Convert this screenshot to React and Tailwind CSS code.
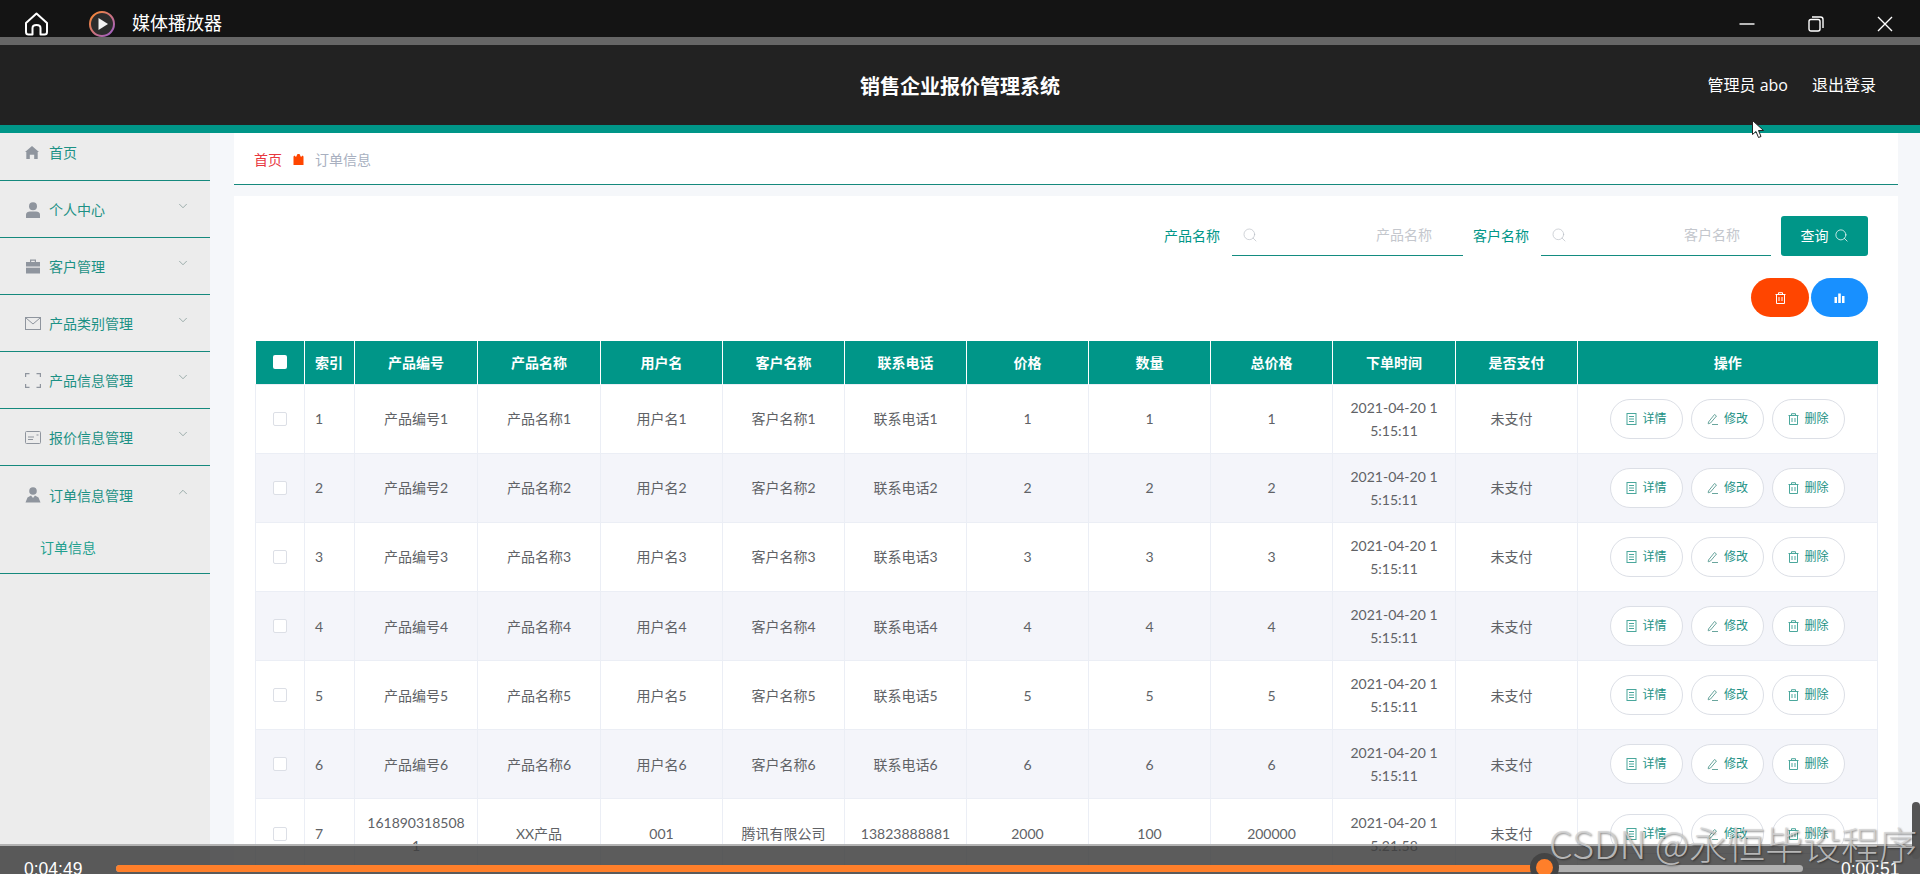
import React from "react";
import { ChevronDown, ChevronUp, Search } from "lucide-react";

const teal = "text-[#009688]";

const Home = () => (
  <svg width="16" height="15" viewBox="0 0 16 15" fill="#8f959e"><path d="M8 0 L16 7 H14.5 V15 H10.5 V10 H5.5 V15 H1.5 V7 H0 Z" /></svg>
);
const User = () => (
  <svg width="16" height="16" viewBox="0 0 16 16" fill="#8f959e"><circle cx="8" cy="4.2" r="4" /><path d="M1 16 V12.5 C1 10.5 3 9.5 5 9.5 H11 C13 9.5 15 10.5 15 12.5 V16 Z" /></svg>
);
const Case = () => (
  <svg width="16" height="15" viewBox="0 0 16 15" fill="#8f959e"><path d="M5 3 V0.5 H11 V3 H9.8 V1.7 H6.2 V3 Z" /><path d="M1 3 H15 V7.5 H1 Z" /><path d="M1 8.7 H15 V14.5 H1 Z" /></svg>
);
const Mail = () => (
  <svg width="16" height="13" viewBox="0 0 16 13" fill="none" stroke="#8f959e" strokeWidth="1"><rect x="0.5" y="0.5" width="15" height="12" /><path d="M1 1 L8 7 L15 1" /></svg>
);
const Scan = () => (
  <svg width="16" height="15" viewBox="0 0 16 15" fill="none" stroke="#8f959e" strokeWidth="1.2"><path d="M0.6 4 V0.6 H4.5 M11.5 0.6 H15.4 V4 M0.6 11 V14.4 H4.5 M11.5 14.4 H15.4 V11" /></svg>
);
const Card = () => (
  <svg width="16" height="13" viewBox="0 0 16 13" fill="none" stroke="#8f959e" strokeWidth="1"><rect x="0.5" y="0.5" width="15" height="12" rx="1" /><path d="M3 6 H9 M3 8.5 H8 M11.5 4 H13.5" /></svg>
);
const Person2 = () => (
  <svg width="16" height="16" viewBox="0 0 16 16" fill="#8f959e"><circle cx="8" cy="4" r="3.8" /><path d="M0.5 15.5 L2.5 10.5 L6 8.5 L8 11 L10 8.5 L13.5 10.5 L15.5 15.5 Z" /></svg>
);
const Crown = () => (
  <svg width="11" height="11" viewBox="0 0 11 11" fill="#ff4500"><path d="M0.5 2.5 L1.5 1.5 L3 3 L4.5 0 H6.5 L8 3 L9.5 1.5 L10.5 2.5 V11 H0.5 Z" /></svg>
);
const Detail = () => (
  <svg width="11" height="12" viewBox="0 0 11 12" fill="none" stroke="#4aa79c" strokeWidth="1"><rect x="1" y="0.5" width="9" height="11" /><path d="M3 3.5 H8 M3 6 H8 M3 8.5 H8" /></svg>
);
const Pen = () => (
  <svg width="12" height="12" viewBox="0 0 12 12" fill="none" stroke="#6aa69e" strokeWidth="1"><path d="M1.5 9 L7.5 1.5 L9.5 3 L3.5 10 L1.2 10.8 Z" /><path d="M5 11.5 H11" /></svg>
);
const Trash = ({ color = "#4aa79c" }) => (
  <svg width="11" height="12" viewBox="0 0 11 12" fill="none" stroke={color} strokeWidth="1"><path d="M0.5 2.5 H10.5 M3.5 2.5 V0.7 H7.5 V2.5 M1.5 2.5 V11.5 H9.5 V2.5 M4 5 V9 M7 5 V9" /></svg>
);

const menu = [
  { label: "个人中心", Icon: User },
  { label: "客户管理", Icon: Case },
  { label: "产品类别管理", Icon: Mail },
  { label: "产品信息管理", Icon: Scan },
  { label: "报价信息管理", Icon: Card },
];

const Sidebar = () => (
  <aside className="w-[210px] shrink-0 bg-[#ececec] text-[14px] text-[#1c9185]">
    <div className="h-[48px] border-b border-[#15897d] flex items-center pl-[25px] pb-[8px] gap-[10px]">
      <div className="w-[14px] flex justify-center"><Home /></div>
      <span>首页</span>
    </div>
    {menu.map(({ label, Icon }) => (
      <div key={label} className="h-[57px] border-b border-[#15897d] flex items-center pl-[25px] pr-[20px] pt-[1px]">
        <div className="w-[16px] flex justify-center"><Icon /></div>
        <span className="ml-[8px] flex-1">{label}</span>
        <ChevronDown size={14} strokeWidth={1.1} className="mb-[7px] text-[#6f8a86]" />
      </div>
    ))}
    <div className="h-[108px] border-b border-[#15897d]">
      <div className="h-[57px] flex items-center pl-[25px] pr-[20px] pt-[1px]">
        <div className="w-[16px] flex justify-center"><Person2 /></div>
        <span className="ml-[8px] flex-1">订单信息管理</span>
        <ChevronUp size={14} strokeWidth={1.1} className="mb-[7px] text-[#6f8a86]" />
      </div>
      <div className="pl-[40px] pt-[2px] text-[#22a08f] leading-[46px]">订单信息</div>
    </div>
  </aside>
);

const Filter = ({ label, w }) => (
  <div className="flex items-center">
    <span className={`text-[14px] ${teal} mr-[12px] pb-[2px]`}>{label}</span>
    <div className={`${w} h-[40px] border-b border-[#138c80] flex items-center justify-between pl-[10px] pr-[31px] pb-[2px] text-[14px] text-[#c4c7cd]`}>
      <Search size={16} strokeWidth={1} className="text-[#b8bcc4]" />
      <span>{label}</span>
    </div>
  </div>
);

const ActionBtn = ({ Icon, text }) => (
  <button className="w-[73px] h-[40px] rounded-[20px] border border-[#dcdfe6] bg-white flex items-center justify-center gap-[5px] text-[12px] text-[#1c9185]">
    <Icon />
    <span>{text}</span>
  </button>
);

const heads = ["产品编号", "产品名称", "用户名", "客户名称", "联系电话", "价格", "数量", "总价格", "下单时间", "是否支付"];

const rows = [1, 2, 3, 4, 5, 6].map((n) => [
  `产品编号${n}`, `产品名称${n}`, `用户名${n}`, `客户名称${n}`, `联系电话${n}`, `${n}`, `${n}`, `${n}`, "2021-04-20 15:15:11", "未支付",
]);
rows.push(["1618903185081", "XX产品", "001", "腾讯有限公司", "13823888881", "2000", "100", "200000", "2021-04-20 15:21:58", "未支付"]);

const cellPad = (j) => (j === 8 ? "px-[15px]" : j === 9 ? "pl-[10px] pr-[20px]" : "px-[10px]");

const DataTable = () => (
  <table className="w-[1622px] table-fixed border-collapse text-[14px] text-[#606266]">
    <colgroup>
      <col className="w-[49px]" />
      <col className="w-[50px]" />
      <col className="w-[123px]" />
      <col className="w-[123px]" />
      <col className="w-[122px]" />
      <col className="w-[122px]" />
      <col className="w-[122px]" />
      <col className="w-[122px]" />
      <col className="w-[122px]" />
      <col className="w-[122px]" />
      <col className="w-[123px]" />
      <col className="w-[122px]" />
      <col className="w-[300px]" />
    </colgroup>
    <thead>
      <tr className="h-[43px] bg-[#009688] text-white">
        <th className="border-r border-white">
          <div className="w-[14px] h-[14px] rounded-[2px] bg-white mx-auto" />
        </th>
        <th className="border-r border-white text-left pl-[10px] font-bold">索引</th>
        {heads.map((h) => (
          <th key={h} className="border-r border-white font-bold text-center">{h}</th>
        ))}
        <th className="font-bold text-center">操作</th>
      </tr>
    </thead>
    <tbody>
      {rows.map((r, i) => (
        <tr key={i} className={`h-[69.17px] ${i % 2 === 1 ? "bg-[#f4f5fa]" : "bg-white"}`}>
          <td className="border border-[#ebeef5]">
            <div className="w-[14px] h-[14px] rounded-[2px] border border-[#dcdfe6] bg-white mx-auto" />
          </td>
          <td className="border border-[#ebeef5] pl-[10px]">{i + 1}</td>
          {r.map((c, j) => (
            <td key={j} className={`border border-[#ebeef5] text-center leading-[23px] break-all ${cellPad(j)}`}>{c}</td>
          ))}
          <td className="border border-[#ebeef5]">
            <div className="flex justify-center gap-[8px]">
              <ActionBtn Icon={Detail} text="详情" />
              <ActionBtn Icon={Pen} text="修改" />
              <ActionBtn Icon={Trash} text="删除" />
            </div>
          </td>
        </tr>
      ))}
    </tbody>
  </table>
);

export default function App() {
  return (
    <div className="relative h-[874px] overflow-hidden flex flex-col bg-[#f5f7fa] font-['Lato','Noto_Sans_CJK_SC',sans-serif]">
      {/* media player title bar */}
      <div className="h-[37px] shrink-0 bg-[#141414] flex items-center text-white pt-[10px]">
        <svg className="ml-[25px] shrink-0" width="23" height="24" viewBox="0 0 23 24" fill="none" stroke="white" strokeWidth="2" strokeLinejoin="round">
          <path d="M11.5 1.5 L22 11 V20 C22 21.5 21 22.5 19.5 22.5 H15.5 V16 C15.5 14 14 13 11.5 13 C9 13 7.5 14 7.5 16 V22.5 H3.5 C2 22.5 1 21.5 1 20 V11 Z" />
        </svg>
        <svg className="ml-[41px] mt-[1px] shrink-0" width="26" height="26" viewBox="0 0 26 26">
          <defs>
            <linearGradient id="lg" x1="0" y1="0" x2="1" y2="1">
              <stop offset="0" stopColor="#ff8a2a" />
              <stop offset="1" stopColor="#9a5cd0" />
            </linearGradient>
          </defs>
          <circle cx="13" cy="13" r="12" fill="#2c2c2c" stroke="url(#lg)" strokeWidth="2" />
          <path d="M9.5 7 L19 13 L9.5 19 Z" fill="#f2f2f2" />
        </svg>
        <span className="ml-[17px] text-[18px]">媒体播放器</span>
        <div className="ml-auto flex items-center text-white">
          <svg width="16" height="16" viewBox="0 0 16 16" stroke="white" strokeWidth="1.4"><path d="M0.5 8 H15.5" /></svg>
          <svg className="ml-[53px]" width="16" height="16" viewBox="0 0 16 16" fill="none" stroke="white" strokeWidth="1.4"><rect x="1" y="3.5" width="11" height="11.5" rx="2" /><path d="M4 1 H12.5 C14 1 15 2 15 3.5 V12" /></svg>
          <svg className="ml-[53px] mr-[27px]" width="16" height="16" viewBox="0 0 16 16" stroke="white" strokeWidth="1.4"><path d="M1 1 L15 15 M15 1 L1 15" /></svg>
        </div>
      </div>
      <div className="h-[8px] shrink-0 bg-[#666666]" />

      {/* app header */}
      <header className="h-[80px] shrink-0 bg-[#222222] flex items-center relative text-white pt-[1px]">
        <h1 className="w-full text-center text-[20px] font-bold">销售企业报价管理系统</h1>
        <div className="absolute right-[44px] top-[0px] h-full flex items-center gap-[24px] text-[16px]">
          <span>管理员 <span className="font-['Open_Sans',sans-serif]">abo</span></span>
          <span>退出登录</span>
        </div>
      </header>
      <div className="h-[8px] shrink-0 bg-[#009688]" />

      {/* body */}
      <div className="flex flex-1 min-h-0">
        <Sidebar />
        <main className="flex-1 min-w-0 pl-[24px] pr-[22px]">
          <div className="h-[52px] bg-white border-b border-[#15897d] flex items-center pl-[20px] pt-[1px] text-[14px]">
            <span className="text-[#e8373f]">首页</span>
            <span className="ml-[11px] mr-[11px] flex"><Crown /></span>
            <span className="text-[#a8b0c0]">订单信息</span>
          </div>
          <section className="mt-[11px] bg-white px-[21px] pt-[20px]">
            <div className="flex justify-end items-center pr-[9px] gap-[10px]">
              <Filter label="产品名称" w="w-[231px]" />
              <Filter label="客户名称" w="w-[230px]" />
              <button className="w-[87px] h-[40px] rounded-[3px] bg-[#009688] text-white text-[14px] flex items-center justify-center gap-[5px] pb-[2px]">
                查询 <Search size={15} strokeWidth={1.2} />
              </button>
            </div>
            <div className="flex justify-end gap-[2px] pr-[9px] mt-[22px]">
              <button className="w-[58px] h-[39px] rounded-full bg-[#ff4500] flex items-center justify-center">
                <Trash color="#ffffff" />
              </button>
              <button className="w-[57px] h-[39px] rounded-full bg-[#1890ff] flex items-center justify-center">
                <svg width="11" height="10" viewBox="0 0 11 10" fill="white"><path d="M0.5 4 H3 V10 H0.5 Z M4.2 0.5 H6.8 V10 H4.2 Z M8 3 H10.5 V10 H8 Z" /></svg>
              </button>
            </div>
            <div className="mt-[24px]">
              <DataTable />
            </div>
          </section>
        </main>
      </div>

      {/* mouse pointer */}
      <svg className="absolute left-[1752px] top-[120px]" width="13" height="19" viewBox="0 0 13 19">
        <path d="M0.5 0.5 V14.5 L4 11.5 L6.5 17.5 L9 16.5 L6.5 10.5 L11.5 10.5 Z" fill="white" stroke="#222" strokeWidth="1" />
      </svg>

      {/* player controls overlay */}
      <div className="absolute left-0 right-0 bottom-0 h-[30px] border-t-2 border-[#d8d8d8]/70 bg-[#404040]/85 text-white font-['Liberation_Sans',sans-serif] text-[17.5px]">
        <span className="absolute left-[24px] top-[13px] leading-[20px]">0:04:49</span>
        <span className="absolute left-[1841px] top-[13px] leading-[20px]">0:00:51</span>
        <div className="absolute left-[116px] top-[19px] h-[7px] w-[1687px] rounded-full bg-[#b0b0b0]">
          <div className="h-full w-[1428px] rounded-full bg-[#ff7f2a]" />
        </div>
        <div className="absolute left-[1530px] top-[7px] w-[29px] h-[29px] rounded-full bg-[#444444] flex items-center justify-center">
          <div className="w-[17px] h-[17px] rounded-full bg-[#ff7f2a]" />
        </div>
      </div>

      {/* scrollbar */}
      <div className="absolute left-[1912px] top-[802px] w-[8px] h-[57px] rounded-[4px] bg-[#555555]" />

      {/* watermark */}
      <div className="absolute left-[1549px] top-[821px] whitespace-nowrap text-[38px] leading-[44px] font-light text-[#d4d4d4]/80 [text-shadow:1px_1px_2px_rgba(0,0,0,0.45)] font-['Noto_Sans_CJK_SC',sans-serif]">
        CSDN @永恒毕设程序
      </div>
    </div>
  );
}
